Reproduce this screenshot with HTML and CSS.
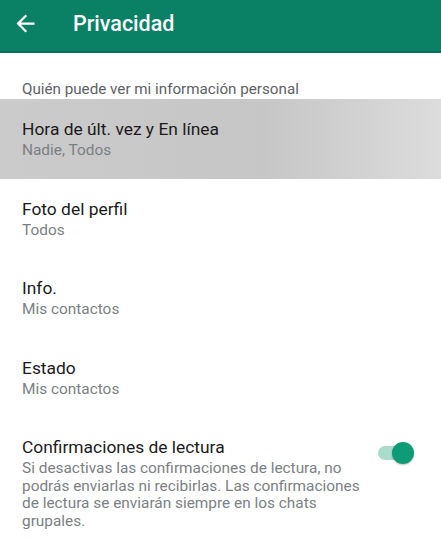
FILE: index.html
```html
<!DOCTYPE html>
<html lang="es">
<head>
  <meta charset="UTF-8">
  <title>Privacidad</title>
  <link rel="stylesheet" href="styles.css">
</head>
<body>
  <div class="toolbar">
    <svg class="back" width="27" height="27" viewBox="0 0 24 24">
      <path d="M20 11H7.83l5.59-5.59L12 4l-8 8 8 8 1.41-1.41L7.83 13H20v-2z" fill="#fff"/>
    </svg>
    <h1>Privacidad</h1>
  </div>

  <div class="section-title">Quién puede ver mi información personal</div>

  <div class="row pressed">
    <div class="title">Hora de últ. vez y En línea</div>
    <div class="sub">Nadie, Todos</div>
  </div>
  <div class="row">
    <div class="title">Foto del perfil</div>
    <div class="sub">Todos</div>
  </div>
  <div class="row">
    <div class="title">Info.</div>
    <div class="sub">Mis contactos</div>
  </div>
  <div class="row">
    <div class="title">Estado</div>
    <div class="sub">Mis contactos</div>
  </div>
  <div class="row switch-row">
    <div class="text">
      <div class="title">Confirmaciones de lectura</div>
      <div class="sub">Si desactivas las confirmaciones de lectura, no podrás enviarlas ni recibirlas. Las confirmaciones de lectura se enviarán siempre en los chats grupales.</div>
    </div>
    <div class="switch"><span class="thumb"></span></div>
  </div>
</body>
</html>
```

FILE: styles.css
```css
body {
  margin: 0;
  background-color: #fff;
  font-family: Roboto, "Noto Sans", sans-serif;
  color: #1b1b1b;
}

.toolbar {
  display: flex;
  align-items: center;
  height: 46px;
  padding: 0 0 5px 12px;
  background-color: #0a8165;
  border-bottom: 2px solid #07705a;
}

.back {
  margin-right: 34px;
}

h1 {
  margin: 0;
  font-size: 21.5px;
  font-weight: 500;
  color: #fff;
}

.section-title {
  padding: 27px 22px 1px;
  font-size: 15.2px;
  line-height: 18px;
  color: #5e6266;
}

.row {
  box-sizing: border-box;
  height: 79.5px;
  padding: 0 22px;
  display: flex;
  flex-direction: column;
  justify-content: center;
}

.pressed {
  background: linear-gradient(to right, #cbcbcb, #c6c6c6 60%, #dcdcdc);
}

.title {
  font-size: 17.4px;
  line-height: 22px;
  color: #1b1b1b;
}

.sub {
  margin-top: 2px;
  font-size: 15.4px;
  line-height: 17.5px;
  color: #7b7f83;
}

.switch-row {
  height: auto;
  flex-direction: row;
  align-items: flex-start;
  justify-content: space-between;
  padding-top: 19px;
}

.switch-row .text {
  width: 345px;
}

.switch {
  position: relative;
  width: 36px;
  height: 22px;
  margin: 6px 5px 0 0;
}

.switch::before {
  content: "";
  position: absolute;
  left: 0;
  top: 4px;
  width: 28px;
  height: 14px;
  border-radius: 7px;
  background-color: #a9dccb;
}

.thumb {
  position: absolute;
  top: 0;
  right: 0;
  width: 22px;
  height: 22px;
  border-radius: 50%;
  background-color: #0e9c76;
  box-shadow: 0 1px 2px rgba(0, 0, 0, 0.25);
}
```
